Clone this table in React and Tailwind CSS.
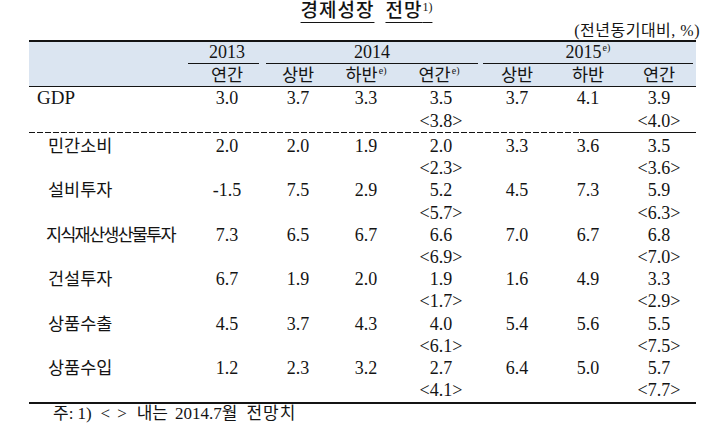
import React from 'react'

const cols = 'grid grid-cols-[159px_78px_64px_72px_78px_74px_68px_74px]'

// 행 데이터: v = 연간/반기 값, f = [2014 연간 전망, 2015 연간 전망]
const rows = [
  { label: '민간소비', v: ['2.0', '2.0', '1.9', '2.0', '3.3', '3.6', '3.5'], f: ['<2.3>', '<3.6>'] },
  { label: '설비투자', v: ['-1.5', '7.5', '2.9', '5.2', '4.5', '7.3', '5.9'], f: ['<5.7>', '<6.3>'] },
  { label: '지식재산생산물투자', tight: true, v: ['7.3', '6.5', '6.7', '6.6', '7.0', '6.7', '6.8'], f: ['<6.9>', '<7.0>'] },
  { label: '건설투자', v: ['6.7', '1.9', '2.0', '1.9', '1.6', '4.9', '3.3'], f: ['<1.7>', '<2.9>'] },
  { label: '상품수출', v: ['4.5', '3.7', '4.3', '4.0', '5.4', '5.6', '5.5'], f: ['<6.1>', '<7.5>'] },
  { label: '상품수입', v: ['1.2', '2.3', '3.2', '2.7', '6.4', '5.0', '5.7'], f: ['<4.1>', '<7.7>'] },
]

function Sup({ children }) {
  return <sup className="text-[10px] -top-[7px] ml-[1px]">{children}</sup>
}

function DataRow({ label, v, f, h, labelClass }) {
  return (
    <div>
      <div className={`${cols} text-[18px]`} style={{ height: h, lineHeight: `${h}px` }}>
        <div className={`text-[17.5px] whitespace-nowrap ${labelClass}`}>{label}</div>
        {v.map((x, i) => (
          <div key={i} className="text-center">{x}</div>
        ))}
      </div>
      <div className={`${cols} text-[18px]`} style={{ height: h, lineHeight: `${h}px` }}>
        <div />
        <div />
        <div />
        <div />
        <div className="text-center">{f[0]}</div>
        <div />
        <div />
        <div className="text-center">{f[1]}</div>
      </div>
    </div>
  )
}

export default function App() {
  return (
    <div className="w-[708px] h-[429px] overflow-hidden bg-white text-[#141414] font-['Liberation_Serif','Noto_Sans_CJK_KR',serif]">
      {/* 제목 */}
      <div className="h-[22px] leading-[22px] text-center pl-[25px]">
        <span className="text-[19px] font-medium tracking-[1px] underline decoration-1 underline-offset-[5px]">
          <span className="mr-[11px]">경제성장</span>전망<sup className="text-[12px] -top-[6px] tracking-normal">1)</sup>
        </span>
      </div>
      <div className="h-[18px] leading-[18px] text-right pr-[8px] text-[16px] tracking-[0.5px]">(전년동기대비, %)</div>

      {/* 표 */}
      <div className="ml-[29px] w-[667px]">
        <div className="h-[2px] bg-[#141414]" />
        <div className="bg-[#dbe5f1]">
          <div className={`${cols} h-[22px] leading-[21px] text-[18px]`}>
            <div />
            <div className="mr-[7px] border-b border-[#141414] text-center pl-[7px]">2013</div>
            <div className="col-span-3 mr-[2px] border-b border-[#141414] text-center">2014</div>
            <div className="col-span-3 ml-[3px] mr-[3px] border-b border-[#141414] text-center">
              2015<Sup>e)</Sup>
            </div>
          </div>
          <div className={`${cols} h-[22px] leading-[22px] text-[17.5px]`}>
            <div />
            <div className="text-center">연간</div>
            <div className="text-center">상반</div>
            <div className="text-center">하반<Sup>e)</Sup></div>
            <div className="text-center pr-[4px]">연간<Sup>e)</Sup></div>
            <div className="text-center">상반</div>
            <div className="text-center">하반</div>
            <div className="text-center">연간</div>
          </div>
        </div>
        <div className="h-px bg-[#141414]" />

        <DataRow
          label="GDP"
          v={['3.0', '3.7', '3.3', '3.5', '3.7', '4.1', '3.9']}
          f={['<3.8>', '<4.0>']}
          h={22.5}
          labelClass="pl-[8px] text-[19px]"
        />

        <div className="flex h-px">
          <div className="w-[551px] bg-[repeating-linear-gradient(90deg,#141414_0_6px,transparent_6px_8px)]" />
          <div className="flex-1 bg-[#141414]" />
        </div>

        <div className="pt-[2px]">
          {rows.map((r) => (
            <DataRow
              key={r.label}
              label={r.label}
              v={r.v}
              f={r.f}
              h={22.2}
              labelClass={r.tight ? 'pl-[17px] tracking-[-1.8px]' : 'pl-[19px]'}
            />
          ))}
        </div>

        <div className="h-[1.5px] bg-[#141414] mt-[1px]" />
      </div>

      {/* 주석 */}
      <div className="pl-[53px] h-[20px] leading-[20px] text-[17px] whitespace-nowrap">
        <span>주:</span>
        <span className="ml-[4px]">1)</span>
        <span className="ml-[9px]">&lt;</span>
        <span className="ml-[7px]">&gt;</span>
        <span className="ml-[10px]">내는</span>
        <span className="ml-[7px]">2014.7월</span>
        <span className="ml-[9px] tracking-[1px]">전망치</span>
      </div>
    </div>
  )
}
